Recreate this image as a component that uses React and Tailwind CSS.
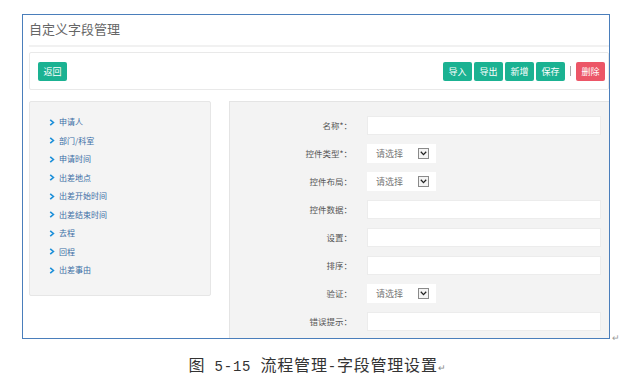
import React from "react";

const fields = [
  "申请人",
  "部门/科室",
  "申请时间",
  "出差地点",
  "出差开始时间",
  "出差结束时间",
  "去程",
  "回程",
  "出差事由",
];

const formRows = [
  { label: "名称*：", type: "input" },
  { label: "控件类型*：", type: "select" },
  { label: "控件布局：", type: "select" },
  { label: "控件数据：", type: "input" },
  { label: "设置：", type: "input" },
  { label: "排序：", type: "input" },
  { label: "验证：", type: "select" },
  { label: "错误提示：", type: "input" },
];

const font = { fontFamily: '"Noto Sans CJK SC", "Noto Sans", sans-serif' };
const mono = { fontFamily: '"Liberation Mono", monospace' };

const Chevron = () => (
  <svg width="6" height="7" viewBox="0 0 6 7" className="shrink-0">
    <path d="M1.2 0.8 L4.4 3.5 L1.2 6.2" fill="none" stroke="#1b8fd9" strokeWidth="1.6" />
  </svg>
);

const SelectBox = () => (
  <div className="flex items-center w-[69px] h-[19px] bg-white pl-[9px] pr-[7px]">
    <span className="text-[9px] text-[#777] leading-none">请选择</span>
    <div className="ml-auto w-[11px] h-[11px] border border-[#8a8a8a] bg-[#f4f4f4] flex items-center justify-center">
      <svg width="7" height="5" viewBox="0 0 7 5">
        <path d="M0.8 0.8 L3.5 3.6 L6.2 0.8" fill="none" stroke="#222" strokeWidth="1.3" />
      </svg>
    </div>
  </div>
);

const Btn = ({ children, red }) => (
  <button
    className={
      "w-[29px] h-[19px] rounded-[2px] text-white text-[9px] leading-none flex items-center justify-center " +
      (red ? "bg-[#ec5667]" : "bg-[#1bb292]")
    }
  >
    {children}
  </button>
);

export default function App() {
  return (
    <div className="w-[635px] h-[384px] bg-white overflow-hidden" style={font}>
      <div className="flex items-end pt-[14px] pl-[22px]">
        <div className="w-[588px] h-[325px] border border-[#4a7ebb] overflow-hidden pl-[6px]">
          {/* title */}
          <div className="h-[32px] flex items-center border-b-2 border-[#f1f1f1]">
            <span className="text-[13px] text-[#666] mt-[-2px]">自定义字段管理</span>
          </div>

          {/* toolbar */}
          <div className="mt-[5px] h-[38px] border border-[#e9e9e9] rounded-[2px] flex items-center pl-[8px] pr-[3px]">
            <Btn>返回</Btn>
            <div className="ml-auto flex items-center gap-[2px]">
              <Btn>导入</Btn>
              <Btn>导出</Btn>
              <Btn>新增</Btn>
              <Btn>保存</Btn>
              <span className="w-px h-[10px] bg-[#aaa] mx-[3px]"></span>
              <Btn red>删除</Btn>
            </div>
          </div>

          {/* body */}
          <div className="mt-[11px] flex items-start gap-[18px]">
            <div className="w-[182px] h-[195px] bg-[#f4f4f4] border border-[#e6e6e6] rounded-[2px] pt-[11px] pl-[19px]">
              {fields.map((f) => (
                <div key={f} className="h-[18.5px] flex items-center gap-[4px]">
                  <Chevron />
                  <span className="text-[8px] text-[#3b6ea5] leading-none">{f}</span>
                </div>
              ))}
            </div>

            <div className="flex-1 h-[240px] bg-[#f3f3f3] border-l border-t border-[#e4e4e4] pt-[9px]">
              {formRows.map((r) => (
                <div key={r.label} className="h-[28px] flex items-center">
                  <div className="w-[124px] text-right text-[8.5px] text-[#555] leading-none pr-[2px]">
                    {r.label}
                  </div>
                  <div className="ml-[13px]">
                    {r.type === "input" ? (
                      <div className="w-[234px] h-[19px] bg-white border border-[#ececec]"></div>
                    ) : (
                      <SelectBox />
                    )}
                  </div>
                </div>
              ))}
            </div>
          </div>
        </div>
        <span className="text-[9px] text-[#999] leading-none mb-[-3px] ml-[2px]">↵</span>
      </div>

      <div className="mt-[17px] text-center text-[16px] text-[#333] leading-none tracking-[0.8px]">
        图<span className="text-[14px]" style={mono}> 5-15 </span>
        流程管理<span className="text-[14px]" style={mono}>-</span>
        字段管理设置<span className="text-[9px] text-[#888]">↵</span>
      </div>
    </div>
  );
}
